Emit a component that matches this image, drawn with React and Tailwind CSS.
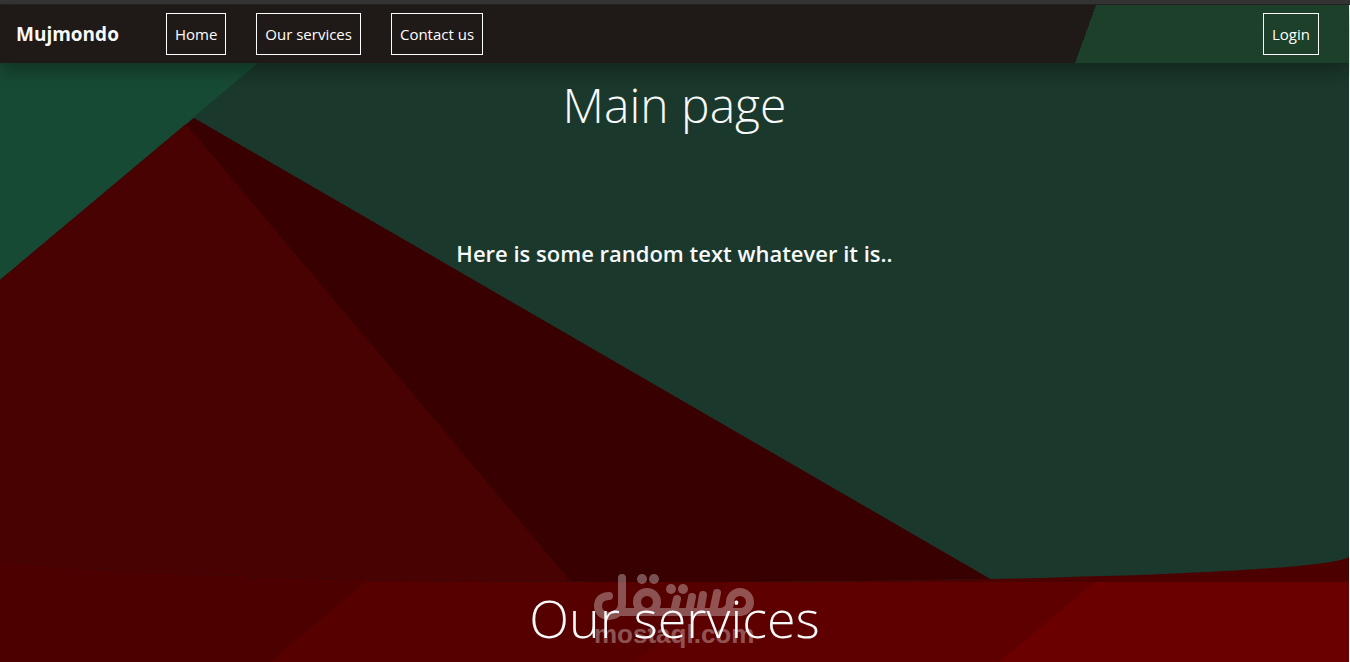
import React from "react";

const navLinks = ["Home", "Our services", "Contact us"];

const NavButton = ({ children }) => (
  <a href="#" className="border border-white px-2 py-2 text-[15px] leading-6 text-white">
    {children}
  </a>
);

const Navbar = () => (
  <nav className="relative z-10 flex items-center bg-[linear-gradient(110deg,#1f1918_80%,#1c4029_80%)] py-2 pr-[30px] pl-4 shadow-[0_8px_16px_rgba(0,0,0,0.3)]">
    <a href="#" className="mr-[47px] text-[19px] leading-8 font-bold text-[#f8f9fa]">
      Mujmondo
    </a>
    <div className="flex gap-[30px]">
      {navLinks.map((label) => (
        <NavButton key={label}>{label}</NavButton>
      ))}
    </div>
    <div className="ml-auto flex">
      <NavButton>Login</NavButton>
    </div>
  </nav>
);

const HeroBackground = () => (
  <svg
    className="absolute inset-0 h-full w-full"
    viewBox="0 0 1349 519"
    preserveAspectRatio="none"
    aria-hidden="true"
  >
    <rect width="1349" height="519" fill="#1a382c" />
    <polygon points="0,0 258,0 0,217" fill="#174a34" />
    <polygon points="194,55 0,217 0,525 1006,525" fill="#380000" />
    <polygon points="186,61 0,217 0,525 576,525" fill="#480202" />
  </svg>
);

const Hero = () => (
  <section className="relative min-h-[519px] overflow-hidden rounded-b-[50%_5%] text-center text-[#f8f9fa]">
    <HeroBackground />
    <div className="relative pt-2">
      <h1 className="text-5xl leading-[68px] font-light">Main page</h1>
      <p className="mt-24 text-[22px] leading-9 font-semibold">
        Here is some random text whatever it is..
      </p>
    </div>
  </section>
);

const Watermark = () => (
  <svg
    className="absolute -top-2 left-1/2 h-[84px] w-[168px] -translate-x-[84px]"
    viewBox="0 0 168 84"
    opacity="0.32"
    aria-hidden="true"
  >
    <g fill="none" stroke="#fff" strokeWidth="8" strokeLinecap="round" strokeLinejoin="round">
      <path d="M31 4V30C31 45 7 46 7 32C7 26 11 22 18 22M31 38H150M150 38A10 10 0 1 0 139 28Q139 38 128 38M66 28A10 10 0 1 1 46 28A10 10 0 1 1 66 28M86 25L83 38M101 23L98 38M112 21L109 38M126 19L122 38" />
    </g>
    <g fill="#fff">
      <circle cx="51" cy="5" r="5" />
      <circle cx="63" cy="5" r="5" />
      <circle cx="80" cy="15" r="5" />
      <circle cx="92" cy="15" r="5" />
      <text x="3" y="69" fontSize="26" fontWeight="700" fontFamily="Liberation Sans, sans-serif">
        mostaql.com
      </text>
    </g>
  </svg>
);

const Services = () => (
  <section className="relative flex-1 bg-[linear-gradient(140deg,#4c0000_25.3%,#560000_25.3%,#560000_50.6%,#5e0000_50.6%,#5e0000_75.8%,#6b0000_75.8%)] text-center">
    <Watermark />
    <h2 className="relative text-[52px] leading-[72px] font-light text-[#f8f9fa]">Our services</h2>
  </section>
);

const App = () => {
  return (
    <div className="flex min-h-screen flex-col bg-[#353535] font-['Open_Sans',sans-serif]">
      <div className="h-[5px] border-b border-[#242424]" />
      <main className="flex flex-1 flex-col border-r border-white bg-[#4c0000]">
        <Navbar />
        <Hero />
        <Services />
      </main>
    </div>
  );
};

export default App;
